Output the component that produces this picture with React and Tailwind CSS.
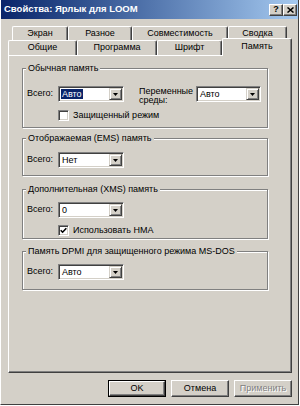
const raised =
  'border border-t-white border-l-white border-r-[#404040] border-b-[#404040] shadow-[inset_-1px_-1px_0_#808080]'
const sunken =
  'border border-t-[#808080] border-l-[#808080] border-r-white border-b-white shadow-[inset_1px_1px_0_#404040,inset_-1px_-1px_0_#d4d0c8]'

function DropBtn() {
  return (
    <div className="w-[13px] h-full flex items-center justify-center bg-[#d4d0c8] border border-t-[#d4d0c8] border-l-[#d4d0c8] border-r-[#404040] border-b-[#404040] shadow-[inset_1px_1px_0_#fff,inset_-1px_-1px_0_#808080]">
      <svg width="5" height="3" viewBox="0 0 5 3">
        <path d="M0 0h5L2.5 3z" fill="#000" />
      </svg>
    </div>
  )
}

function Combo({ value, selected, w = 'w-[66px]' }) {
  return (
    <div className={`${w} h-[16px] flex bg-white p-[1px] ${sunken}`}>
      <div className="flex-1 flex items-center pl-[1px] leading-[10px]">
        <span className={selected ? 'bg-[#0a246a] text-white px-[1px]' : 'px-[1px]'}>{value}</span>
      </div>
      <DropBtn />
    </div>
  )
}

function Check({ checked }) {
  return (
    <div className={`w-[11px] h-[11px] bg-white flex items-center justify-center ${sunken}`}>
      {checked && (
        <svg width="7" height="7" viewBox="0 0 7 7">
          <path d="M0.7 3.2 L2.6 5.2 L6.3 1.2" stroke="#000" strokeWidth="1.6" fill="none" />
        </svg>
      )}
    </div>
  )
}

function Group({ title, className, children }) {
  return (
    <fieldset className={`ml-[13px] w-[246px] border border-[#808080] shadow-[inset_1px_1px_0_#fff,1px_1px_0_#fff] ${className}`}>
      <legend className="ml-[3px] px-[2px] leading-[11px] bg-[#d4d0c8]">{title}</legend>
      {children}
    </fieldset>
  )
}

function TotalRow({ value, selected, className = '' }) {
  return (
    <div className={`flex items-center pl-[4px] ${className}`}>
      <span className="w-[31px]">Всего:</span>
      <Combo value={value} selected={selected} />
    </div>
  )
}

function Tab({ label, w }) {
  return (
    <div className={`${w} h-full flex items-center justify-center rounded-t-[2px] border-l border-t border-r border-l-white border-t-white border-r-[#404040] shadow-[inset_-1px_0_0_#808080]`}>
      {label}
    </div>
  )
}

function Btn({ children, def, disabled }) {
  return (
    <div className={`w-[58px] h-[17px] flex ${def ? 'border border-black' : ''}`}>
      <div className={`flex-1 flex items-center justify-center ${raised}`}>
        <span className={disabled ? 'text-[#808080] [text-shadow:1px_1px_0_#fff]' : ''}>{children}</span>
      </div>
    </div>
  )
}

export default function App() {
  return (
    <div className="w-[300px] h-[406px] bg-white font-['Liberation_Sans',Arial,sans-serif] text-[9px] text-black">
      <div className="w-[299px] h-[405px] bg-[#d4d0c8] border-l border-l-white border-r border-r-[#404040] border-b border-b-[#404040] flex flex-col">
        {/* title bar */}
        <div className="h-[19px] flex items-center bg-gradient-to-r from-[#0a246a] to-[#a6caf0] pl-[3px] pr-[1px]">
          <span className="flex-1 text-white font-bold text-[9.5px]">Свойства: Ярлык для LOOM</span>
          <div className={`w-[14px] h-[12px] flex items-center justify-center bg-[#d4d0c8] ${raised}`}>
            <span className="font-bold text-[9px] leading-none">?</span>
          </div>
          <div className={`w-[14px] h-[12px] flex items-center justify-center bg-[#d4d0c8] ${raised}`}>
            <svg width="7" height="6" viewBox="0 0 7 6">
              <path d="M0.5 0.5 L6.5 5.5 M6.5 0.5 L0.5 5.5" stroke="#000" strokeWidth="1.5" />
            </svg>
          </div>
        </div>

        {/* tabs */}
        <div className="mt-[7px] ml-[11px] h-[14px] flex">
          <Tab label="Экран" w="w-[56px]" />
          <Tab label="Разное" w="w-[64px]" />
          <Tab label="Совместимость" w="w-[96px]" />
          <Tab label="Сводка" w="w-[59px]" />
        </div>
        <div className="ml-[7px] h-[15px] flex items-end">
          <Tab label="Общие" w="w-[69px]" />
          <Tab label="Программа" w="w-[80px]" />
          <Tab label="Шрифт" w="w-[65px]" />
          <div className="relative z-10 w-[70px] h-[18px] -mb-[1px] pb-[2px] flex items-center justify-center bg-[#d4d0c8] rounded-t-[2px] border-l border-t border-r border-l-white border-t-white border-r-[#404040] shadow-[inset_-1px_0_0_#808080]">
            Память
          </div>
        </div>

        {/* panel */}
        <div className={`ml-[7px] w-[284px] h-[318px] pt-[7px] ${raised}`}>
          <Group title="Обычная память" className="h-[65px]">
            <div className="flex items-start mt-[12px] pl-[4px]">
              <span className="w-[31px] h-[16px] flex items-center">Всего:</span>
              <Combo value="Авто" selected />
              <span className="ml-[15px] w-[57px] leading-[9px] pt-[1px]">
                Переменные
                <br />
                среды:
              </span>
              <Combo value="Авто" w="w-[65px]" />
            </div>
            <div className="flex items-center ml-[35px] mt-[4px]">
              <Check />
              <span className="ml-[4px]">Защищенный режим</span>
            </div>
          </Group>

          <Group title="Отображаемая (EMS) память" className="h-[43px] mt-[5px]">
            <TotalRow value="Нет" className="mt-[8px]" />
          </Group>

          <Group title="Дополнительная (XMS) память" className="h-[55px] mt-[8px]">
            <TotalRow value="0" className="mt-[7px]" />
            <div className="flex items-center ml-[35px] mt-[6px]">
              <Check checked />
              <span className="ml-[4px]">Использовать HMA</span>
            </div>
          </Group>

          <Group title="Память DPMI для защищенного режима MS-DOS" className="h-[44px] mt-[7px]">
            <TotalRow value="Авто" className="mt-[7px]" />
          </Group>
        </div>

        {/* buttons */}
        <div className="mt-[7px] pr-[6px] flex justify-end gap-[5px]">
          <Btn def>OK</Btn>
          <Btn>Отмена</Btn>
          <Btn disabled>Применить</Btn>
        </div>
      </div>
    </div>
  )
}
